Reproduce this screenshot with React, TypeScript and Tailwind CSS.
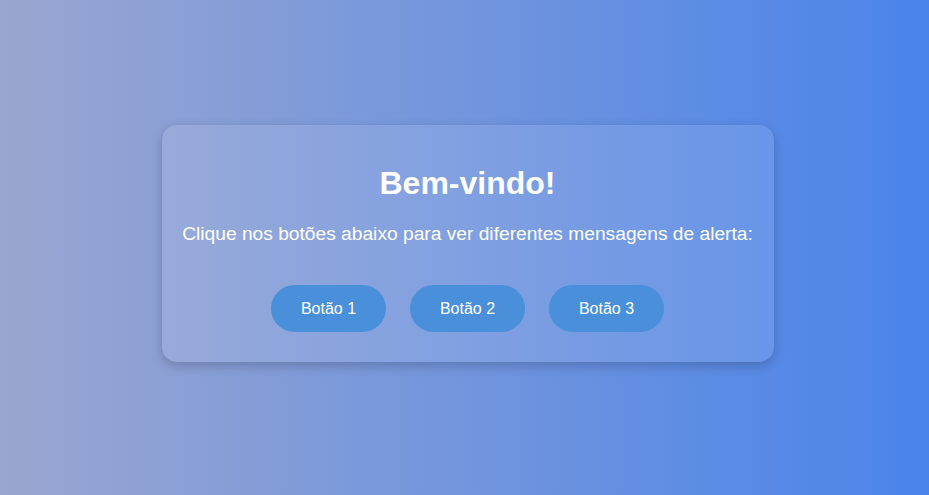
export default function App() {
  return (
    <div
      className="w-full h-[495px] flex items-center justify-center bg-[linear-gradient(to_right,#9aa6d0,#4a84ea)] pl-[6px] pb-[8px]"
      style={{ fontFamily: '"Liberation Sans", Arial, sans-serif' }}
    >
      <div className="w-[612px] h-[237px] rounded-[15px] bg-white/10 shadow-[0_4px_12px_rgba(0,0,0,0.2)] flex flex-col items-center pt-[40px]">
        <h1 className="text-[32px] leading-[37px] font-bold text-white">Bem-vindo!</h1>
        <p className="mt-[21px] text-[19.2px] leading-[22px] text-white whitespace-nowrap">
          Clique nos botões abaixo para ver diferentes mensagens de alerta:
        </p>
        <div className="mt-[40px] flex gap-[24px]">
          {["Botão 1", "Botão 2", "Botão 3"].map((t) => (
            <button
              key={t}
              className="w-[115px] h-[47px] rounded-full bg-[#4a8fda] text-white text-[16px]"
            >
              {t}
            </button>
          ))}
        </div>
      </div>
    </div>
  );
}
